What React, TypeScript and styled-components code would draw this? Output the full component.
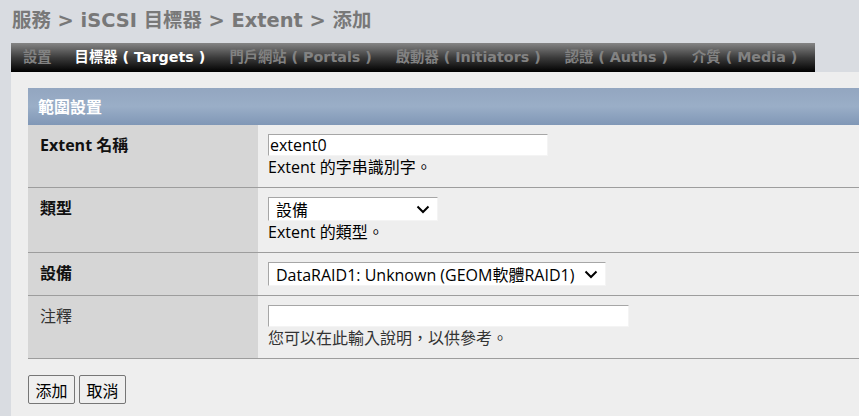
import React from "react";
import styled, { createGlobalStyle } from "styled-components";

const GlobalStyle = createGlobalStyle`
  html, body {
    margin: 0;
    padding: 0;
    background: #d9dce1;
    overflow: hidden;
  }
  body {
    font-family: "Open Sans", "Noto Sans CJK TC", sans-serif;
  }
`;

const Page = styled.div`
  padding-left: 11px;
  min-height: 416px;
  display: flex;
  flex-direction: column;
`;

const Title = styled.h1`
  margin: 0;
  height: 43px;
  line-height: 42px;
  padding-left: 1px;
  font-family: "DejaVu Sans", "Noto Sans CJK TC", sans-serif;
  font-size: 19.4px;
  font-weight: bold;
  color: #787878;
  white-space: nowrap;
`;

const TabBar = styled.ul`
  margin: 0;
  padding: 0;
  list-style: none;
  width: 804px;
  height: 29px;
  display: flex;
  align-items: center;
  background: linear-gradient(to bottom, #858585 0%, #3c3c3c 50%, #000 100%);
`;

const Tab = styled.li<{ $active?: boolean }>`
  padding: 0 12px;
  font-family: "DejaVu Sans", "Noto Sans CJK TC", sans-serif;
  font-size: 14.3px;
  font-weight: bold;
  line-height: 29px;
  white-space: pre;
  color: ${(p) => (p.$active ? "#ffffff" : "#828282")};

  &:first-child {
    padding-left: 12px;
    padding-right: 11px;
  }
`;

const Content = styled.div`
  flex: 1;
  background: #eeeeee;
  padding: 16px 0 12px 17px;
`;

const Panel = styled.div`
  width: calc(100% + 20px);
`;

const PanelHeader = styled.div`
  height: 37px;
  line-height: 37px;
  padding-left: 10px;
  font-family: "Noto Sans CJK TC", sans-serif;
  font-size: 16px;
  font-weight: bold;
  color: #ffffff;
  background: linear-gradient(to bottom, #93a6c0 0%, #9aaec7 50%, #8097b6 100%);
`;

const Row = styled.div`
  display: grid;
  grid-template-columns: 230px 1fr;
  border-bottom: 1px solid #9d9d9d;
`;

const Label = styled.div<{ $required?: boolean }>`
  background: #d6d6d6;
  padding: 9px 12px;
  font-family: "Open Sans", "Noto Sans CJK TC", sans-serif;
  font-size: 16px;
  line-height: 22px;
  font-weight: ${(p) => (p.$required ? "bold" : "normal")};
  color: ${(p) => (p.$required ? "#111" : "#333")};
`;

const Value = styled.div`
  padding: 9px 10px;
  display: flex;
  flex-direction: column;
  align-items: flex-start;
`;

const TextInput = styled.input<{ $w: number }>`
  box-sizing: border-box;
  width: ${(p) => p.$w}px;
  height: 22px;
  margin: 0;
  padding: 0 1px;
  border: 1px solid;
  border-color: #a6a6a6 #f4f4f4 #f4f4f4 #a6a6a6;
  background: #fff;
  font-family: "Open Sans", sans-serif;
  font-size: 16px;
  color: #000;
  outline: none;
`;

const SelectBox = styled.div<{ $w: number }>`
  box-sizing: border-box;
  width: ${(p) => p.$w}px;
  height: 24px;
  display: flex;
  align-items: center;
  justify-content: space-between;
  padding: 0 7px 0 7px;
  border: 1px solid;
  border-color: #a6a6a6 #f4f4f4 #f4f4f4 #a6a6a6;
  background: #fff;
  font-family: "Open Sans", "Noto Sans CJK TC", sans-serif;
  font-size: 16px;
  color: #000;
  white-space: nowrap;
`;

const Help = styled.div<{ $muted?: boolean }>`
  font-family: "Open Sans", "Noto Sans CJK TC", sans-serif;
  font-size: 16px;
  line-height: 22px;
  color: ${(p) => (p.$muted ? "#333" : "#000")};
`;

const Buttons = styled.div`
  display: flex;
  gap: 4px;
  margin-top: 16px;
`;

const Button = styled.button`
  box-sizing: border-box;
  width: 47px;
  height: 29px;
  padding: 0;
  border: 1px solid #767676;
  border-radius: 2px;
  background: #efefef;
  font-family: "Noto Sans CJK TC", sans-serif;
  font-size: 16px;
  color: #000;
`;

const Chevron = () => (
  <svg width="14" height="9" viewBox="0 0 14 9">
    <path d="M1.5 1.5 L7 7 L12.5 1.5" fill="none" stroke="#000" strokeWidth="2" />
  </svg>
);

export default function App() {
  return (
    <>
      <GlobalStyle />
      <Page>
        <Title>服務 &gt; iSCSI 目標器 &gt; Extent &gt; 添加</Title>
        <TabBar>
          <Tab>設置</Tab>
          <Tab $active>目標器 ( Targets )</Tab>
          <Tab>門戶網站 ( Portals )</Tab>
          <Tab>啟動器 ( Initiators )</Tab>
          <Tab>認證 ( Auths )</Tab>
          <Tab>介質 ( Media )</Tab>
        </TabBar>
        <Content>
          <Panel>
            <PanelHeader>範圍設置</PanelHeader>
            <Row>
              <Label $required>Extent 名稱</Label>
              <Value>
                <TextInput $w={280} defaultValue="extent0" />
                <Help>Extent 的字串識別字。</Help>
              </Value>
            </Row>
            <Row>
              <Label $required>類型</Label>
              <Value>
                <SelectBox $w={170}>
                  <span>設備</span>
                  <Chevron />
                </SelectBox>
                <Help>Extent 的類型。</Help>
              </Value>
            </Row>
            <Row>
              <Label $required>設備</Label>
              <Value>
                <SelectBox $w={338}>
                  <span>DataRAID1: Unknown (GEOM軟體RAID1)</span>
                  <Chevron />
                </SelectBox>
              </Value>
            </Row>
            <Row>
              <Label>注釋</Label>
              <Value>
                <TextInput $w={361} />
                <Help $muted>您可以在此輸入說明，以供參考。</Help>
              </Value>
            </Row>
          </Panel>
          <Buttons>
            <Button>添加</Button>
            <Button>取消</Button>
          </Buttons>
        </Content>
      </Page>
    </>
  );
}
